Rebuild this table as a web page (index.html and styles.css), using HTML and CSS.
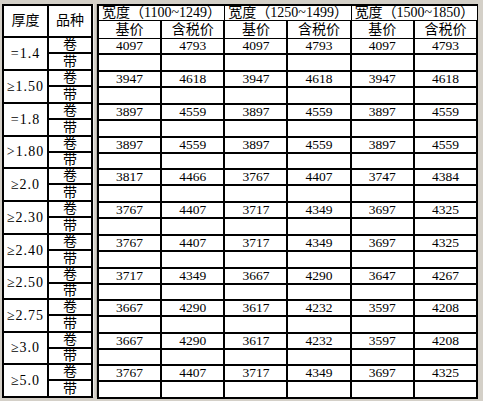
FILE: index.html
```html
<!DOCTYPE html>
<html lang="zh">
<head>
<meta charset="utf-8">
<title>价格表</title>
<link rel="stylesheet" href="styles.css">
</head>
<body>
<div class="sheet">
  <table class="left">
    <tr class="head"><th class="c1">厚度</th><th class="c2">品种</th></tr>
    <tr class="a"><td rowspan="2" class="thk">=1.4</td><td class="k">卷</td></tr>
    <tr class="b"><td class="k">带</td></tr>
    <tr class="a"><td rowspan="2" class="thk">≥1.50</td><td class="k">卷</td></tr>
    <tr class="b"><td class="k">带</td></tr>
    <tr class="a"><td rowspan="2" class="thk">=1.8</td><td class="k">卷</td></tr>
    <tr class="b"><td class="k">带</td></tr>
    <tr class="a"><td rowspan="2" class="thk">&gt;1.80</td><td class="k">卷</td></tr>
    <tr class="b s"><td class="k">带</td></tr>
    <tr class="a"><td rowspan="2" class="thk">≥2.0</td><td class="k">卷</td></tr>
    <tr class="b"><td class="k">带</td></tr>
    <tr class="a"><td rowspan="2" class="thk">≥2.30</td><td class="k">卷</td></tr>
    <tr class="b"><td class="k">带</td></tr>
    <tr class="a"><td rowspan="2" class="thk">≥2.40</td><td class="k">卷</td></tr>
    <tr class="b"><td class="k">带</td></tr>
    <tr class="a"><td rowspan="2" class="thk">≥2.50</td><td class="k">卷</td></tr>
    <tr class="b s"><td class="k">带</td></tr>
    <tr class="a"><td rowspan="2" class="thk">≥2.75</td><td class="k">卷</td></tr>
    <tr class="b"><td class="k">带</td></tr>
    <tr class="a"><td rowspan="2" class="thk">≥3.0</td><td class="k">卷</td></tr>
    <tr class="b s"><td class="k">带</td></tr>
    <tr class="a"><td rowspan="2" class="thk">≥5.0</td><td class="k">卷</td></tr>
    <tr class="b"><td class="k">带</td></tr>
  </table>
  <div class="split"></div>
  <table class="right">
    <tr class="h1"><th colspan="2">宽度（1100~1249）</th><th colspan="2">宽度（1250~1499）</th><th colspan="2">宽度（1500~1850）</th></tr>
    <tr class="h2"><th>基价</th><th>含税价</th><th>基价</th><th>含税价</th><th>基价</th><th>含税价</th></tr>
    <tr class="a"><td>4097</td><td>4793</td><td>4097</td><td>4793</td><td>4097</td><td>4793</td></tr>
    <tr class="b"><td></td><td></td><td></td><td></td><td></td><td></td></tr>
    <tr class="a"><td>3947</td><td>4618</td><td>3947</td><td>4618</td><td>3947</td><td>4618</td></tr>
    <tr class="b"><td></td><td></td><td></td><td></td><td></td><td></td></tr>
    <tr class="a"><td>3897</td><td>4559</td><td>3897</td><td>4559</td><td>3897</td><td>4559</td></tr>
    <tr class="b"><td></td><td></td><td></td><td></td><td></td><td></td></tr>
    <tr class="a"><td>3897</td><td>4559</td><td>3897</td><td>4559</td><td>3897</td><td>4559</td></tr>
    <tr class="b s"><td></td><td></td><td></td><td></td><td></td><td></td></tr>
    <tr class="a"><td>3817</td><td>4466</td><td>3767</td><td>4407</td><td>3747</td><td>4384</td></tr>
    <tr class="b"><td></td><td></td><td></td><td></td><td></td><td></td></tr>
    <tr class="a"><td>3767</td><td>4407</td><td>3717</td><td>4349</td><td>3697</td><td>4325</td></tr>
    <tr class="b"><td></td><td></td><td></td><td></td><td></td><td></td></tr>
    <tr class="a"><td>3767</td><td>4407</td><td>3717</td><td>4349</td><td>3697</td><td>4325</td></tr>
    <tr class="b"><td></td><td></td><td></td><td></td><td></td><td></td></tr>
    <tr class="a"><td>3717</td><td>4349</td><td>3667</td><td>4290</td><td>3647</td><td>4267</td></tr>
    <tr class="b s"><td></td><td></td><td></td><td></td><td></td><td></td></tr>
    <tr class="a"><td>3667</td><td>4290</td><td>3617</td><td>4232</td><td>3597</td><td>4208</td></tr>
    <tr class="b"><td></td><td></td><td></td><td></td><td></td><td></td></tr>
    <tr class="a"><td>3667</td><td>4290</td><td>3617</td><td>4232</td><td>3597</td><td>4208</td></tr>
    <tr class="b s"><td></td><td></td><td></td><td></td><td></td><td></td></tr>
    <tr class="a"><td>3767</td><td>4407</td><td>3717</td><td>4349</td><td>3697</td><td>4325</td></tr>
    <tr class="b"><td></td><td></td><td></td><td></td><td></td><td></td></tr>
  </table>
</div>
</body>
</html>
```

FILE: styles.css
```css
html, body {
  margin: 0;
  padding: 0;
  background: #d4d0c8;
}

.sheet {
  display: flex;
  align-items: flex-start;
  padding: 4px 0 0 2px;
  width: 483px;
  height: 401px;
  box-sizing: border-box;
  font-family: "Liberation Serif", "Noto Sans CJK SC", serif;
  color: #000;
}

table {
  border-collapse: separate;
  border-spacing: 0;
  table-layout: fixed;
  background: #fff;
  border-top: 2px solid #000;
  border-left: 2px solid #000;
}

th, td {
  box-sizing: border-box;
  padding: 0;
  border-right: 2px solid #000;
  border-bottom: 2px solid #000;
  font-weight: normal;
  text-align: center;
  vertical-align: middle;
  white-space: nowrap;
  overflow: hidden;
  line-height: 14px;
}

/* left table */
.left {
  width: 91px;
}

.left .c1 { width: 45px; }
.left .c2 { width: 44px; }

.left .head th {
  height: 32px;
  font-size: 14px;
}

.thk {
  font-size: 14px;
  letter-spacing: 1px;
}

.k {
  font-size: 14px;
  line-height: 14px;
  vertical-align: bottom;
}

tr.a td { height: 16px; }
tr.b td { height: 17px; }
tr.b.s td { height: 16px; }

/* splitter */
.split {
  width: 4px;
  height: 393px;
  box-sizing: border-box;
  background: #d4d0c8;
  border-left: 1px solid #ecebe8;
  border-right: 1px solid #b8b4ac;
}

/* right table */
.right {
  width: 381px;
}

.right .h1 th {
  height: 14px;
  font-size: 14px;
  text-align: left;
  padding-left: 3px;
  border-bottom-width: 1px;
  border-right-width: 1px;
}

.right .h2 th {
  height: 18px;
  font-size: 14px;
  border-bottom-width: 1px;
}

.right td {
  font-size: 13.5px;
}
```
